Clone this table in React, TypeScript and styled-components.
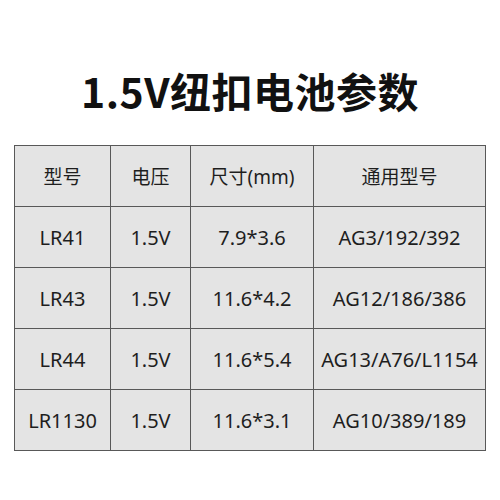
import React from 'react';
import styled, { createGlobalStyle } from 'styled-components';

const GlobalStyle = createGlobalStyle`
  html, body {
    margin: 0;
    padding: 0;
    background: #ffffff;
  }
  body {
    font-family: "Noto Sans CJK SC", "Noto Sans", sans-serif;
    color: #1c1c1c;
  }
`;

const Page = styled.div`
  width: 500px;
  height: 500px;
  display: flex;
  flex-direction: column;
  align-items: center;
  background: #fff;
`;

const Title = styled.h1`
  margin: 63px 0 0;
  height: 54px;
  line-height: 54px;
  font-size: 41px;
  font-weight: 700;
  color: #111;
  letter-spacing: 0.5px;
`;

const Table = styled.table`
  margin-top: 28px;
  width: 467px;
  border-collapse: collapse;
  table-layout: fixed;
  background: #e4e4e4;
`;

const Cell = styled.td<{ $width?: number; $head?: boolean }>`
  width: ${({ $width }) => ($width ? `${$width}px` : 'auto')};
  height: 60px;
  padding: 0;
  border: 1.5px solid #585858;
  text-align: center;
  vertical-align: middle;
  font-family: "Noto Sans", "Noto Sans CJK SC", sans-serif;
  font-size: ${({ $head }) => ($head ? '19px' : '20px')};
  font-weight: 400;
  color: #1e1e1e;
  white-space: nowrap;
`;

const header = ['型号', '电压', '尺寸(mm)', '通用型号'];
const widths = [95, 79, 122, 171];

const rows = [
  ['LR41', '1.5V', '7.9*3.6', 'AG3/192/392'],
  ['LR43', '1.5V', '11.6*4.2', 'AG12/186/386'],
  ['LR44', '1.5V', '11.6*5.4', 'AG13/A76/L1154'],
  ['LR1130', '1.5V', '11.6*3.1', 'AG10/389/189'],
];

const App: React.FC = () => {
  return (
    <>
      <GlobalStyle />
      <Page>
        <Title>1.5V纽扣电池参数</Title>
        <Table>
          <tbody>
            <tr>
              {header.map((h, i) => (
                <Cell key={h} $width={widths[i]} $head>
                  {h}
                </Cell>
              ))}
            </tr>
            {rows.map((r) => (
              <tr key={r[0]}>
                {r.map((c, i) => (
                  <Cell key={i}>{c}</Cell>
                ))}
              </tr>
            ))}
          </tbody>
        </Table>
      </Page>
    </>
  );
};

export default App;
